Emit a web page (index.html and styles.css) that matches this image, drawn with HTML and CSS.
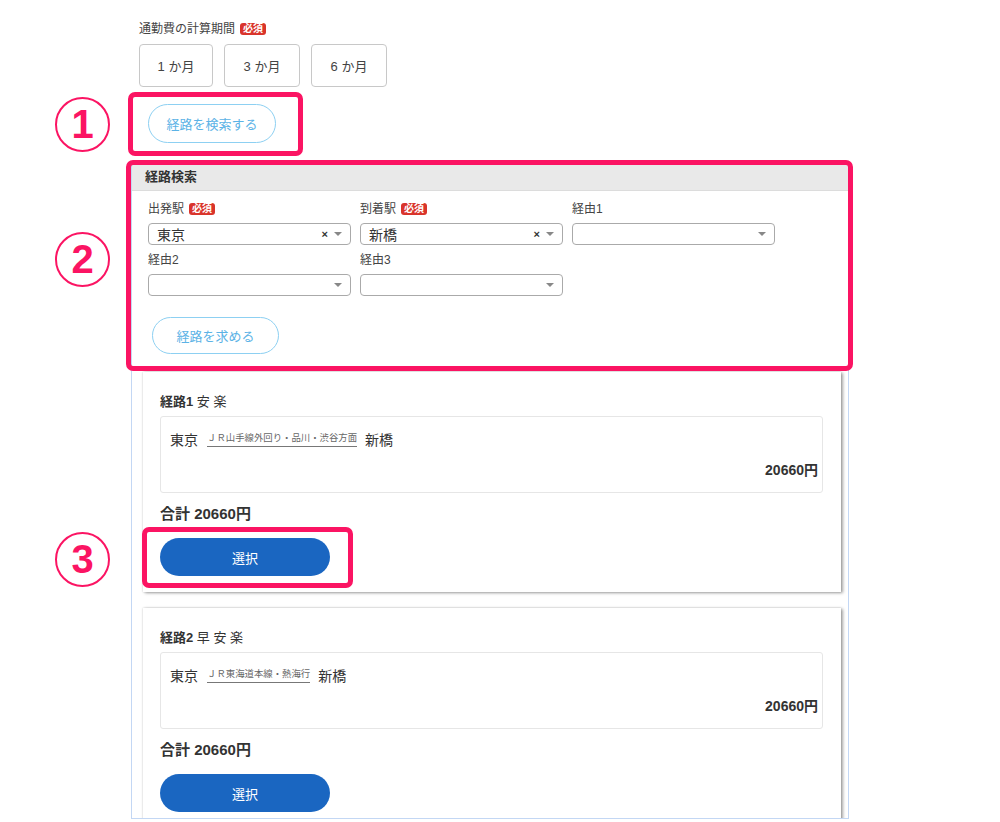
FILE: index.html
```html
<!DOCTYPE html>
<html lang="ja">
<head>
<meta charset="utf-8">
<link rel="stylesheet" href="styles.css">
</head>
<body>
<div class="page">
  <section class="period">
    <div class="label">通勤費の計算期間 <span class="badge">必須</span></div>
    <div class="period-buttons">
      <button class="pbtn w1">1 か月</button>
      <button class="pbtn w2">3 か月</button>
      <button class="pbtn w2">6 か月</button>
    </div>
    <button class="outline-btn search-btn">経路を検索する</button>
  </section>

  <div class="container">
    <div class="panel">
      <div class="panel-head">経路検索</div>
      <div class="panel-body">
        <div class="grid">
          <div class="field">
            <div class="flabel">出発駅 <span class="badge">必須</span></div>
            <div class="select"><span class="val">東京</span><span class="clear">×</span><span class="arrow"></span></div>
          </div>
          <div class="field">
            <div class="flabel">到着駅 <span class="badge">必須</span></div>
            <div class="select"><span class="val">新橋</span><span class="clear">×</span><span class="arrow"></span></div>
          </div>
          <div class="field">
            <div class="flabel">経由1</div>
            <div class="select"><span class="val"></span><span class="arrow"></span></div>
          </div>
          <div class="field">
            <div class="flabel">経由2</div>
            <div class="select"><span class="val"></span><span class="arrow"></span></div>
          </div>
          <div class="field">
            <div class="flabel">経由3</div>
            <div class="select"><span class="val"></span><span class="arrow"></span></div>
          </div>
        </div>
        <button class="outline-btn find-btn">経路を求める</button>
      </div>
    </div>

    <div class="card">
      <div class="card-title"><b>経路1</b> 安 楽</div>
      <div class="route-box">
        <div class="route-line"><span class="st">東京</span><span class="rail">ＪＲ山手線外回り・品川・渋谷方面</span><span class="st">新橋</span></div>
        <div class="fare">20660円</div>
      </div>
      <div class="total">合計 20660円</div>
      <button class="select-btn">選択</button>
    </div>

    <div class="card">
      <div class="card-title"><b>経路2</b> 早 安 楽</div>
      <div class="route-box">
        <div class="route-line"><span class="st">東京</span><span class="rail">ＪＲ東海道本線・熱海行</span><span class="st">新橋</span></div>
        <div class="fare">20660円</div>
      </div>
      <div class="total">合計 20660円</div>
      <button class="select-btn">選択</button>
    </div>
  </div>
</div>

<div class="num n1">1</div>
<div class="num n2">2</div>
<div class="num n3">3</div>
<div class="hl h1"></div>
<div class="hl h2"></div>
<div class="hl h3"></div>
</body>
</html>
```
FILE: styles.css
```css
html, body {
  margin: 0;
  padding: 0;
  background: #fff;
}
body {
  position: relative;
  width: 1000px;
  height: 822px;
  overflow: hidden;
  font-family: "Liberation Sans", "Noto Sans CJK JP", sans-serif;
  color: #333;
}
button {
  font-family: inherit;
  cursor: pointer;
}
.page {
  padding: 21px 0 0 131px;
}
.period {
  padding-left: 8px;
}
.label {
  font-size: 12px;
  line-height: 16px;
  color: #444;
  display: flex;
  align-items: center;
  gap: 5px;
}
.badge {
  display: inline-block;
  background: #d9342b;
  color: #fff;
  font-size: 10px;
  font-weight: bold;
  line-height: 12px;
  padding: 0 3px;
  border-radius: 3px;
}
.period-buttons {
  display: flex;
  gap: 11px;
  margin-top: 7px;
}
.pbtn {
  height: 43px;
  background: #fff;
  border: 1px solid #c8c8c8;
  border-radius: 4px;
  font-size: 13px;
  color: #444;
  padding: 0;
}
.pbtn.w1 { width: 74px; }
.pbtn.w2 { width: 76px; }
.outline-btn {
  display: block;
  background: #fff;
  border: 1px solid #8dd0f2;
  border-radius: 20px;
  color: #5cb3e6;
  font-size: 13px;
  padding: 0;
}
.search-btn {
  margin: 17px 0 0 9px;
  width: 128px;
  height: 39px;
}
.container {
  margin-top: 21px;
  width: 716px;
  border: 1px solid #c3d7f4;
  border-top: none;
  height: 654px;
  overflow: hidden;
}
.panel-head {
  height: 26px;
  line-height: 26px;
  background: #e9e9e9;
  border-bottom: 1px solid #dcdcdc;
  font-size: 13px;
  font-weight: bold;
  color: #333;
  padding-left: 13px;
}
.panel-body {
  padding: 10px 0 10px 16px;
}
.grid {
  display: grid;
  grid-template-columns: repeat(3, 203px);
  column-gap: 9px;
  row-gap: 7px;
}
.flabel {
  font-size: 12px;
  line-height: 16px;
  color: #444;
  display: flex;
  align-items: center;
  gap: 5px;
}
.select {
  margin-top: 6px;
  height: 22px;
  box-sizing: border-box;
  border: 1px solid #aaa;
  border-radius: 4px;
  display: flex;
  align-items: center;
  padding: 0 8px 0 8px;
}
.select .val {
  flex: 1;
  font-size: 14px;
  color: #333;
}
.select .clear {
  font-size: 11px;
  font-weight: bold;
  color: #333;
  margin-right: 6px;
}
.select .arrow {
  width: 0;
  height: 0;
  border-left: 4px solid transparent;
  border-right: 4px solid transparent;
  border-top: 4px solid #888;
}
.find-btn {
  margin: 21px 0 0 4px;
  width: 127px;
  height: 37px;
}
.card {
  width: 698px;
  box-sizing: border-box;
  margin: 8px 0 16px 11px;
  background: #fff;
  box-shadow: 2px 1px 3px rgba(0,0,0,0.35), 0 0 2px rgba(0,0,0,0.2);
  padding: 21px 18px 16px 17px;
}
.card + .card {
  margin-top: 16px;
}
.card-title {
  font-size: 13px;
  line-height: 18px;
  color: #333;
}
.card-title b {
  font-weight: bold;
}
.route-box {
  margin-top: 5px;
  border: 1px solid #e6e6e6;
  border-radius: 3px;
  padding: 12px 4px 13px 9px;
}
.route-line {
  display: flex;
  align-items: center;
  height: 20px;
}
.st {
  font-size: 14px;
  color: #333;
}
.rail {
  font-size: 9.4px;
  color: #666;
  margin: 0 8px 0 9px;
  border-bottom: 1px solid #777;
  line-height: 14px;
  padding: 0 0 1px;
}
.fare {
  margin-top: 12px;
  text-align: right;
  font-size: 14px;
  font-weight: bold;
  line-height: 18px;
  color: #333;
}
.total {
  margin-top: 11px;
  font-size: 15px;
  font-weight: bold;
  line-height: 20px;
  color: #333;
}
.select-btn {
  display: block;
  margin-top: 14px;
  width: 170px;
  height: 38px;
  border: none;
  border-radius: 19px;
  background: #1a66c1;
  color: #fff;
  font-size: 13px;
}
.num {
  position: absolute;
  left: 55px;
  width: 51px;
  height: 51px;
  border: 2px solid #fb1463;
  border-radius: 50%;
  color: #fb1463;
  font-size: 40px;
  font-weight: bold;
  line-height: 51px;
  text-align: center;
}
.n1 { top: 97px; }
.n2 { top: 232px; }
.n3 { top: 532px; }
.hl {
  position: absolute;
  border: 5px solid #fb1463;
  border-radius: 7px;
  box-sizing: border-box;
}
.h1 { left: 128px; top: 92px; width: 175px; height: 64px; }
.h2 { left: 126px; top: 160px; width: 727px; height: 211px; }
.h3 { left: 142px; top: 527px; width: 211px; height: 61px; }
```
